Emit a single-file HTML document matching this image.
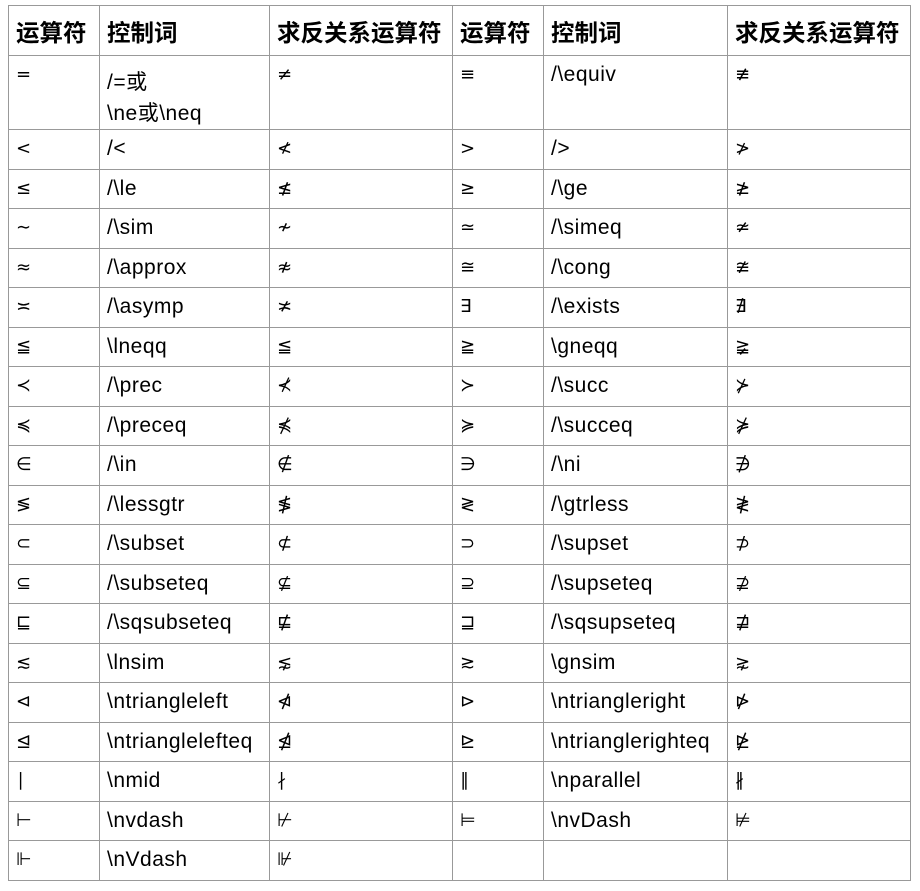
<!DOCTYPE html>
<html><head><meta charset="utf-8"><style>
html,body{margin:0;padding:0;background:#fff;width:920px;height:891px;overflow:hidden}
table{position:absolute;left:8px;top:5px;border-collapse:collapse;table-layout:fixed;font-family:"Liberation Sans","Noto Sans CJK SC",sans-serif;font-size:21px;letter-spacing:0.5px;color:#000}
td,th{border:1px solid #999;padding:0 0 0 7px;vertical-align:top;text-align:left;overflow:hidden;white-space:nowrap;line-height:26px}
th{font-weight:bold;font-size:23.5px;letter-spacing:0;vertical-align:middle;font-family:"Noto Sans CJK SC",sans-serif}
td{padding-top:6px}
tr.r{height:39.5px}
.s{font-family:"DejaVu Sans",sans-serif;font-size:18px;letter-spacing:0}
</style></head><body>
<table>
<colgroup><col style="width:91px"><col style="width:170px"><col style="width:183px"><col style="width:91px"><col style="width:184px"><col style="width:183px"></colgroup>
<tr style="height:50px"><th>运算符</th><th>控制词</th><th>求反关系运算符</th><th>运算符</th><th>控制词</th><th>求反关系运算符</th></tr>
<tr style="height:74px"><td class="s">=</td><td style="padding-top:11px;line-height:31px">/=或<br>\ne或\neq</td><td class="s">≠</td><td class="s">≡</td><td>/\equiv</td><td class="s">≢</td></tr>
<tr class="r"><td class="s">&lt;</td><td>/&lt;</td><td class="s">≮</td><td class="s">&gt;</td><td>/&gt;</td><td class="s">≯</td></tr>
<tr class="r"><td class="s">≤</td><td>/\le</td><td class="s">≰</td><td class="s">≥</td><td>/\ge</td><td class="s">≱</td></tr>
<tr class="r"><td class="s">∼</td><td>/\sim</td><td class="s">≁</td><td class="s">≃</td><td>/\simeq</td><td class="s">≄</td></tr>
<tr class="r"><td class="s">≈</td><td>/\approx</td><td class="s">≉</td><td class="s">≅</td><td>/\cong</td><td class="s">≇</td></tr>
<tr class="r"><td class="s">≍</td><td>/\asymp</td><td class="s">≭</td><td class="s">∃</td><td>/\exists</td><td class="s">∄</td></tr>
<tr class="r"><td class="s">≦</td><td>\lneqq</td><td class="s">≦</td><td class="s">≧</td><td>\gneqq</td><td class="s">≩</td></tr>
<tr class="r"><td class="s">≺</td><td>/\prec</td><td class="s">⊀</td><td class="s">≻</td><td>/\succ</td><td class="s">⊁</td></tr>
<tr class="r"><td class="s">≼</td><td>/\preceq</td><td class="s">⋠</td><td class="s">≽</td><td>/\succeq</td><td class="s">⋡</td></tr>
<tr class="r"><td class="s">∈</td><td>/\in</td><td class="s">∉</td><td class="s">∋</td><td>/\ni</td><td class="s">∌</td></tr>
<tr class="r"><td class="s">≶</td><td>/\lessgtr</td><td class="s">≸</td><td class="s">≷</td><td>/\gtrless</td><td class="s">≹</td></tr>
<tr class="r"><td class="s">⊂</td><td>/\subset</td><td class="s">⊄</td><td class="s">⊃</td><td>/\supset</td><td class="s">⊅</td></tr>
<tr class="r"><td class="s">⊆</td><td>/\subseteq</td><td class="s">⊈</td><td class="s">⊇</td><td>/\supseteq</td><td class="s">⊉</td></tr>
<tr class="r"><td class="s">⊑</td><td>/\sqsubseteq</td><td class="s">⋢</td><td class="s">⊒</td><td>/\sqsupseteq</td><td class="s">⋣</td></tr>
<tr class="r"><td class="s">≲</td><td>\lnsim</td><td class="s">⋦</td><td class="s">≳</td><td>\gnsim</td><td class="s">⋧</td></tr>
<tr class="r"><td class="s">⊲</td><td>\ntriangleleft</td><td class="s">⋪</td><td class="s">⊳</td><td>\ntriangleright</td><td class="s">⋫</td></tr>
<tr class="r"><td class="s">⊴</td><td>\ntrianglelefteq</td><td class="s">⋬</td><td class="s">⊵</td><td>\ntrianglerighteq</td><td class="s">⋭</td></tr>
<tr class="r"><td class="s">∣</td><td>\nmid</td><td class="s">∤</td><td class="s">∥</td><td>\nparallel</td><td class="s">∦</td></tr>
<tr class="r"><td class="s">⊢</td><td>\nvdash</td><td class="s">⊬</td><td class="s">⊨</td><td>\nvDash</td><td class="s">⊭</td></tr>
<tr class="r"><td class="s">⊩</td><td>\nVdash</td><td class="s">⊮</td><td></td><td></td><td></td></tr>
</table>
</body></html>
